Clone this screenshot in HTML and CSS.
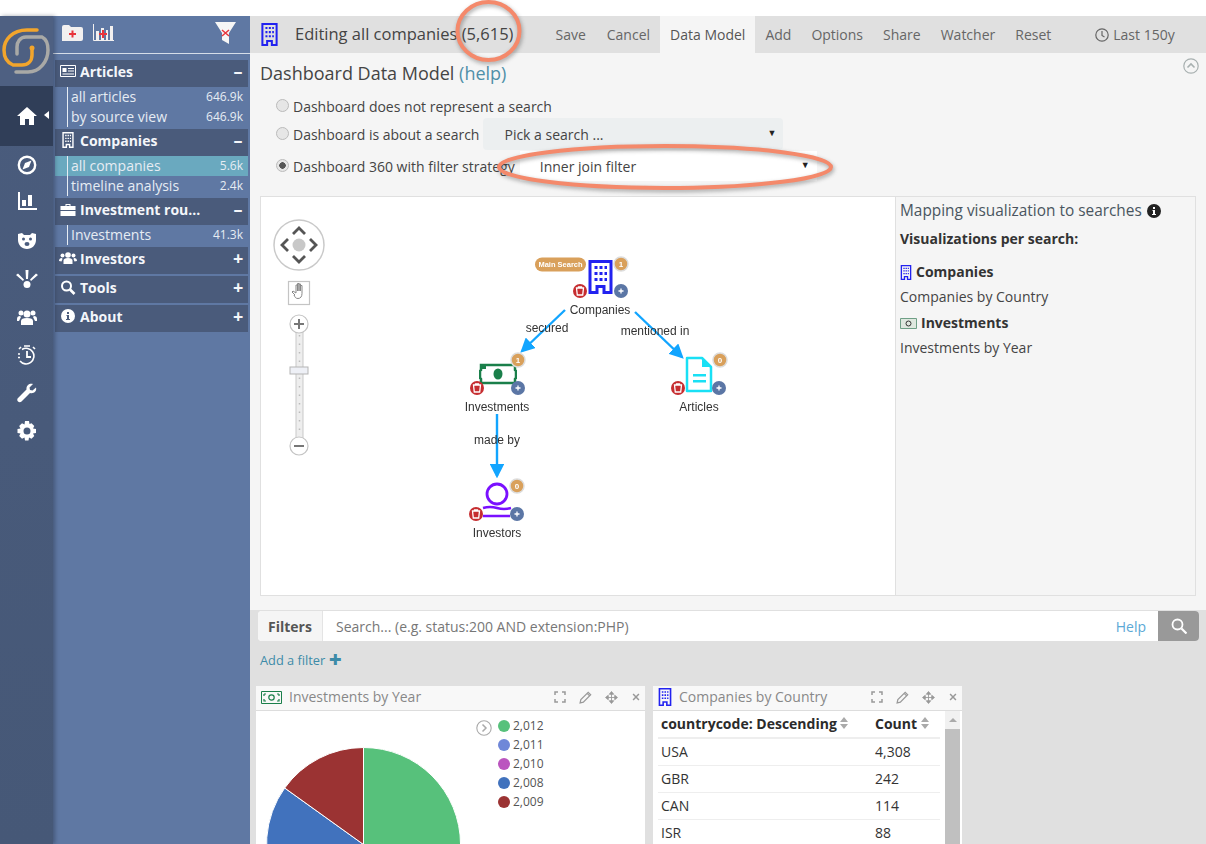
FILE: index.html
```html
<!DOCTYPE html>
<html lang="en">
  <head>
    <meta charset="UTF-8" />
    <title>Editing all companies</title>
    <link rel="stylesheet" href="styles.css">
  </head>
  <body>
    <svg class="defs" width="0" height="0">
      <symbol id="building" viewBox="0 0 24 34">
        <path d="M1.500 1.500h21v31h-7v-6h-7v6h-7z" fill="none" stroke="currentColor" stroke-width="3" />
        <path d="M6 6h3v3H6zM11 6h3v3h-3zM16 6h2.500v3H16zM6 12h3v3H6zM11 12h3v3h-3zM16 12h2.500v3H16zM6 18h3v3H6zM11 18h3v3h-3zM16 18h2.500v3H16z" fill="currentColor" />
      </symbol>
      <symbol id="money" viewBox="0 0 38 22">
        <path d="M2 2h34v5l1 1v7l-1 1v4H2v-4l-1-1V8l1-1z" fill="none" stroke="currentColor" stroke-width="2.500" />
        <ellipse cx="19" cy="11" rx="4.500" ry="5.500" fill="currentColor" />
        <path d="M2 2h5v4H2z" fill="currentColor" />
      </symbol>
      <symbol id="trash" viewBox="0 0 14 14">
        <circle cx="7" cy="7" r="7" fill="#c62d30" />
        <path d="M3.500 4h7l-.8 7H4.300zM5.500 4V3h3v1" fill="none" stroke="#fff" stroke-width="1.300" />
      </symbol>
      <symbol id="more" viewBox="0 0 14 14">
        <circle cx="7" cy="7" r="7" fill="#5b76a5" />
        <path d="M4.500 7h5M7 4.500v5" stroke="#fff" stroke-width="1.300" />
      </symbol>
      <symbol id="expand" viewBox="0 0 12 12">
        <path d="M1 4V1h3M8 1h3v3M11 8v3H8M4 11H1V8" fill="none" stroke="currentColor" stroke-width="1.500" />
      </symbol>
      <symbol id="pencil" viewBox="0 0 12 12">
        <path d="M1 11l.7-3L8.500 1.200l2.300 2.300L4 10.300zM7.500 2.200l2.300 2.300" fill="none" stroke="currentColor" stroke-width="1.100" />
      </symbol>
      <symbol id="move" viewBox="0 0 12 12">
        <path d="M6 .5L8 3H4zM6 11.500L4 9h4zM.5 6L3 4v4zM11.500 6L9 8V4zM6 2v8M2 6h8" fill="currentColor" stroke="currentColor" stroke-width=".8" />
      </symbol>
      <symbol id="close" viewBox="0 0 12 12">
        <path d="M2.500 2.500l7 7M9.500 2.500l-7 7" stroke="currentColor" stroke-width="1.800" />
      </symbol>
      <symbol id="sort" viewBox="0 0 8 12">
        <path d="M4 0l4 5H0zM4 12L0 7h8z" fill="currentColor" />
      </symbol>
    </svg>

    <div class="page">
      <nav class="rail">
        <div class="logo">
          <svg width="48" height="48" viewBox="0 0 48 48" fill="none" stroke-width="3.500" stroke-linecap="round">
            <path d="M14 45H26C38 45 46 34 46 23C46 17 44 12 40 10H24C18 10 15 15 15 20V27" stroke="#a9a9a6" />
            <path d="M35 3H25C10 3 2 13 2 23C2 31 6 36 11 38H20C26 38 30 34 30 28V21" stroke="#f2a52c" />
            <circle cx="30" cy="21" r="2.500" fill="#f2a52c" />
          </svg>
        </div>
        <a class="rail-item is-active">
          <svg width="20" height="18" viewBox="0 0 20 18" fill="#fff"><path d="M10 0l10 9h-3v9h-5v-6H8v6H3V9H0z" /></svg>
        </a>
        <a class="rail-item">
          <svg width="20" height="20" viewBox="0 0 20 20"><circle cx="10" cy="10" r="8.200" fill="none" stroke="#fff" stroke-width="2.400" /><path d="M14.500 5.500L12 12l-6.500 2.500L8 8z" fill="#fff" /></svg>
        </a>
        <a class="rail-item rail-chart">
          <svg width="20" height="20" viewBox="0 0 20 20" fill="#fff"><path d="M1 1h2v16h17v2H1zM5 9h4v6H5zM11 4h4v11h-4z" /></svg>
        </a>
        <a class="rail-item">
          <svg width="20" height="18" viewBox="0 0 20 18" fill="#fff"><path d="M1 2l4-1 2 2h6l2-2 4 1v6c0 5-4 9-9 9s-9-4-9-9z" /><circle cx="6.500" cy="7" r="1.500" fill="#4b5d7e" /><circle cx="13.500" cy="7" r="1.500" fill="#4b5d7e" /><ellipse cx="10" cy="12" rx="2.500" ry="2" fill="#4b5d7e" /></svg>
        </a>
        <a class="rail-item">
          <svg width="24" height="20" viewBox="0 0 24 20" fill="#fff"><circle cx="12" cy="15.500" r="3.500" /><path d="M10.500 1h3l-.5 9h-2zM1 6l2-1.500 6 6L8 12zM23 6l-2-1.500-6 6 1 1.500z" /></svg>
        </a>
        <a class="rail-item">
          <svg width="20" height="16" viewBox="0 0 20 16" fill="#fff"><circle cx="10" cy="5" r="3.500" /><circle cx="4" cy="4" r="2.500" /><circle cx="16" cy="4" r="2.500" /><path d="M4 16v-4c0-2 2-3 6-3s6 1 6 3v4zM0 10c0-2 1-3 3-3l1 1-2 4H0zM20 10c0-2-1-3-3-3l-1 1 2 4h2z" /></svg>
        </a>
        <a class="rail-item">
          <svg width="20" height="20" viewBox="0 0 20 20" fill="none" stroke="#fff" stroke-width="1.600"><path d="M5 4.500A7.800 7.800 0 1 1 3 16" /><path d="M10 6v6h4" stroke-width="1.800" /><path d="M7 1h6M2 4l2-2M18 4l-2-2M1 9h2M1 12.500h2" /></svg>
        </a>
        <a class="rail-item">
          <svg width="20" height="20" viewBox="0 0 20 20" fill="#fff"><path d="M19 4.500l-3.500 3L13 7l-.5-2.500L16 1c-3-1-7 1-6.500 5.500L1 15c-1 1-1 2.500 0 3.500s2.500 1 3.500 0L13 10c4 1 7-2 6-5.500z" /></svg>
        </a>
        <a class="rail-item">
          <svg width="20" height="20" viewBox="0 0 20 20" fill="#fff"><path fill-rule="evenodd" d="M8 0h4l.5 3 2-.8 2.800 2.800-1.300 2.500 3 .5v4l-3 .5 1.300 2.500-2.800 2.800-2.500-1.300-.5 3H8l-.5-3-2.500 1.300L2.200 15l1.300-2.500-3-.5V8l3-.5L2.200 5 5 2.200l2.500 1.300zM10 6.500a3.500 3.500 0 1 0 0 7 3.500 3.500 0 0 0 0-7z" /></svg>
        </a>
      </nav>

      <aside class="sidebar">
        <div class="side-tools">
          <svg width="21" height="16" viewBox="0 0 21 16"><path d="M0 2q0-2 2-2h5l2 2h10q2 0 2 2v10q0 2-2 2H0z" fill="#f2f0f0" /><path d="M7 9h7M10.500 5.500v7" stroke="#e8343c" stroke-width="2" /></svg>
          <svg width="21" height="17" viewBox="0 0 21 17"><path d="M.5 0v16.500H21" fill="none" stroke="#f2f0f0" /><path d="M3 7h3v9H3zM13 6h2v10h-2zM17 2h3v14h-3zM8 4h3v12H8z" fill="#f2f0f0" /><path d="M6 10h8M10 6v8" stroke="#e8343c" stroke-width="2" /></svg>
          <svg class="funnel" width="21" height="22" viewBox="0 0 21 22"><path d="M0 0h21l-7 11v11l-7-4v-7z" fill="#f6f6f6" /><path d="M7 8l7 6M14 8l-7 6" stroke="#e8343c" stroke-width="1.500" /></svg>
        </div>

        <section class="group">
          <h3 class="group-head">
            <svg class="group-icon" width="16" height="12" viewBox="0 0 16 12"><path d="M.5.500h15v11H.5z" fill="none" stroke="#fff" /><path d="M2.500 3h4v4h-4zM8 3h6v1H8zM8 5.500h6v1H8zM2.500 8.500h11.500v1H2.500z" fill="#fff" /></svg>
            <span class="group-name">Articles</span><span class="toggle">–</span>
          </h3>
          <ul class="rows">
            <li class="row"><span>all articles</span><span class="row-count">646.9k</span></li>
            <li class="row"><span>by source view</span><span class="row-count">646.9k</span></li>
          </ul>
        </section>

        <section class="group">
          <h3 class="group-head">
            <svg class="group-icon icon-building" width="12" height="16"><use href="#building" /></svg>
            <span class="group-name">Companies</span><span class="toggle">–</span>
          </h3>
          <ul class="rows">
            <li class="row is-current"><span>all companies</span><span class="row-count">5.6k</span></li>
            <li class="row"><span>timeline analysis</span><span class="row-count">2.4k</span></li>
          </ul>
        </section>

        <section class="group">
          <h3 class="group-head">
            <svg class="group-icon" width="15" height="13" viewBox="0 0 15 13" fill="#fff"><path d="M5 3V1h5v2h5v4H0V3zM6 2v1h3V2zM0 8h15v5H0z" /></svg>
            <span class="group-name">Investment rou...</span><span class="toggle">–</span>
          </h3>
          <ul class="rows">
            <li class="row"><span>Investments</span><span class="row-count">41.3k</span></li>
          </ul>
        </section>

        <section class="group">
          <h3 class="group-head">
            <svg class="group-icon" width="18" height="12" viewBox="0 0 18 12" fill="#fff"><circle cx="9" cy="3" r="2.800" /><circle cx="3.500" cy="3.500" r="2" /><circle cx="14.500" cy="3.500" r="2" /><path d="M4.500 12V8.500C4.500 7 6 6 9 6s4.500 1 4.500 2.500V12zM0 9c0-2 1-3 3-3l.5 1-1 2.500zM18 9c0-2-1-3-3-3l-.5 1 1 2.500z" /></svg>
            <span class="group-name">Investors</span><span class="toggle">+</span>
          </h3>
        </section>

        <section class="group">
          <h3 class="group-head">
            <svg class="group-icon" width="15" height="15" viewBox="0 0 15 15" fill="none" stroke="#fff"><circle cx="6" cy="6" r="4.500" stroke-width="2" /><path d="M9.500 9.500l4.500 4.500" stroke-width="2.600" /></svg>
            <span class="group-name">Tools</span><span class="toggle">+</span>
          </h3>
        </section>

        <section class="group">
          <h3 class="group-head">
            <svg class="group-icon" width="14" height="14" viewBox="0 0 14 14"><circle cx="7" cy="7" r="7" fill="#fff" /><path d="M6 3h2v2H6zM5.500 6H8v4h1v1H5v-1h1V7h-.5z" fill="#4a5b7b" /></svg>
            <span class="group-name">About</span><span class="toggle">+</span>
          </h3>
        </section>
      </aside>

      <main class="main">
        <header class="topbar">
          <svg class="title-icon" width="17" height="23"><use href="#building" /></svg>
          <h1 class="title">Editing all companies <span>(5,615)</span></h1>
          <div class="menu">
            <a>Save</a>
            <a>Cancel</a>
            <a class="is-open">Data Model</a>
            <a>Add</a>
            <a>Options</a>
            <a>Share</a>
            <a>Watcher</a>
            <a>Reset</a>
          </div>
          <div class="timepicker">
            <svg width="14" height="14" viewBox="0 0 14 14" fill="none" stroke="#666" stroke-width="1.200"><circle cx="7" cy="7" r="6.200" /><path d="M7 3v4.500l2.500 1.500" /></svg>
            Last 150y
          </div>
        </header>

        <section class="editor">
          <div class="editor-head">
            <h2>Dashboard Data Model <a>(help)</a></h2>
            <svg width="16" height="16" viewBox="0 0 16 16" fill="none" stroke="#a8b0b0" stroke-width="1.200"><circle cx="8" cy="8" r="7.200" /><path d="M4.500 9.500L8 6l3.500 3.500" stroke-width="1.600" /></svg>
          </div>

          <div class="strategy">
            <label class="choice">
              <input type="radio" name="model" />Dashboard does not represent a search
            </label>
            <label class="choice choice-search">
              <input type="radio" name="model" />Dashboard is about a search
              <span class="pick pick-search">Pick a search ...<i>▼</i></span>
            </label>
            <label class="choice choice-filter">
              <input type="radio" name="model" checked />Dashboard 360 with filter strategy
              <span class="pick pick-filter">Inner join filter<i>▼</i></span>
            </label>
          </div>

          <div class="model">
            <div class="canvas">
              <svg class="graph" width="634" height="398" viewBox="261 197 634 398">
                <defs>
                  <marker id="head" markerWidth="6" markerHeight="6" refX="5" refY="3" orient="auto">
                    <path d="M0 0l6 3L0 6z" fill="#12a5ff" />
                  </marker>
                </defs>

                <!-- pan and zoom controls -->
                <circle cx="299" cy="245" r="25" fill="#fff" stroke="#c9c9c9" stroke-width="1.500" />
                <circle cx="299" cy="245" r="6.500" fill="#c8c8c8" />
                <path d="M293 234l6-6 6 6M293 256l6 6 6-6M288 239l-6 6 6 6M310 239l6 6-6 6" fill="none" stroke="#555" stroke-width="2.800" />
                <rect x="288.500" y="281.500" width="21" height="23" fill="#fff" stroke="#c4c4c4" stroke-width="1.200" />
                <path d="M295 295l-3-3 1-1 3 2v-8h1.500v6-7.500h1.500v7.500-7h1.500v7-5.500h1.500v8c0 3-1.500 5-4 5s-3-1.500-4-3.500z" fill="#fff" stroke="#888" />
                <rect x="296" y="330" width="7" height="112" fill="#eee" stroke="#c9c9c9" />
                <path d="M299.500 335v102" stroke="#bbb" stroke-width="1.500" stroke-dasharray="1.500 7" />
                <rect x="290" y="367" width="18" height="7" fill="#eef0f6" stroke="#b5b5b5" />
                <circle cx="299" cy="324" r="9" fill="#fff" stroke="#c4c4c4" stroke-width="1.200" />
                <path d="M294 324h10M299 319v10" stroke="#777" stroke-width="2" />
                <circle cx="299" cy="446" r="9" fill="#fff" stroke="#c4c4c4" stroke-width="1.200" />
                <path d="M294 446h10" stroke="#777" stroke-width="2" />

                <!-- edges -->
                <g stroke="#12a5ff" stroke-width="2.400" fill="none">
                  <path d="M565 310L522 351" marker-end="url(#head)" />
                  <path d="M635 312L682 357" marker-end="url(#head)" />
                  <path d="M497 414V476" marker-end="url(#head)" />
                </g>
                <g class="edge-label">
                  <text x="547" y="332">secured</text>
                  <text x="655" y="335">mentioned in</text>
                  <text x="497" y="444">made by</text>
                </g>

                <!-- nodes -->
                <rect x="535" y="257.500" width="51" height="14" rx="7" fill="#d9a05b" />
                <text class="main-search" x="560.500" y="267">Main Search</text>
                <use href="#building" x="588" y="260" width="25" height="34" color="#2222f0" />
                <circle class="badge" cx="621" cy="264" r="7" />
                <text class="badge-text" x="621" y="267">1</text>
                <use href="#trash" x="573" y="284" width="14" height="14" />
                <use href="#more" x="614" y="284" width="14" height="14" />
                <text class="node-label" x="600" y="314">Companies</text>

                <use href="#money" x="479" y="363" width="38" height="22" color="#1a7f4a" />
                <circle class="badge" cx="518" cy="360" r="7" />
                <text class="badge-text" x="518" y="363">1</text>
                <use href="#trash" x="470" y="381" width="14" height="14" />
                <use href="#more" x="511" y="381" width="14" height="14" />
                <text class="node-label" x="497" y="411">Investments</text>

                <path d="M687 358h15l9 9v24h-24z" fill="none" stroke="#19e0f5" stroke-width="2.500" stroke-linejoin="round" />
                <path d="M702 358v9h9z" fill="#19e0f5" />
                <path d="M693 374h13v2.500h-13zM693 380h13v2.500h-13z" fill="#19e0f5" />
                <circle class="badge" cx="720" cy="360" r="7" />
                <text class="badge-text" x="720" y="363">0</text>
                <use href="#trash" x="671" y="381" width="14" height="14" />
                <use href="#more" x="712" y="381" width="14" height="14" />
                <text class="node-label" x="699" y="411">Articles</text>

                <circle cx="497" cy="494" r="10" fill="none" stroke="#7a10ff" stroke-width="2.800" />
                <path d="M483 508q7-2 14 0t14 0M483 516h27" fill="none" stroke="#7a10ff" stroke-width="2.400" />
                <circle class="badge" cx="517" cy="486" r="7" />
                <text class="badge-text" x="517" y="489">0</text>
                <use href="#trash" x="469" y="507" width="14" height="14" />
                <use href="#more" x="510" y="507" width="14" height="14" />
                <text class="node-label" x="497" y="537">Investors</text>
              </svg>
            </div>
            <div class="mapping">
              <p class="mapping-title">Mapping visualization to searches
                <svg width="14" height="14" viewBox="0 0 14 14"><circle cx="7" cy="7" r="7" fill="#222" /><path d="M6 3h2v2H6zM5.500 6H8v4h1v1H5v-1h1V7h-.5z" fill="#fff" /></svg>
              </p>
              <p class="mapping-sub">Visualizations per search:</p>
              <p class="mapping-entity">
                <svg class="icon-blue" width="12" height="15"><use href="#building" /></svg> Companies
              </p>
              <p class="mapping-vis">Companies by Country</p>
              <p class="mapping-entity">
                <svg class="icon-green" width="17" height="11" viewBox="0 0 17 11"><path d="M.5.500h16v10H.5z" fill="#dfe8df" stroke="#6f9f86" /><circle cx="8.500" cy="5.500" r="2.500" fill="none" stroke="#333" /></svg> Investments
              </p>
              <p class="mapping-vis">Investments by Year</p>
            </div>
          </div>
        </section>

        <section class="board">
          <div class="filterbar">
            <span class="filter-label">Filters</span>
            <span class="filter-query">Search... (e.g. status:200 AND extension:PHP)</span>
            <a class="filter-help">Help</a>
            <span class="filter-go">
              <svg width="16" height="16" viewBox="0 0 16 16" fill="none" stroke="#fff"><circle cx="6.500" cy="6.500" r="5" stroke-width="1.800" /><path d="M10.500 10.500l5 5" stroke-width="2.200" /></svg>
            </span>
          </div>
          <a class="add-filter">Add a filter <b>✚</b></a>

          <div class="panels">
            <article class="panel panel-pie">
              <header class="panel-head">
                <svg width="21" height="13" viewBox="0 0 21 13"><path d="M.5.500h20v12H.5z" fill="none" stroke="#1a7f4a" /><path d="M3 3v2M3 8v2h2M18 3v2M18 8v2h-2M3 3h2M16 3h2" stroke="#1a7f4a" stroke-width="1.200" fill="none" /><circle cx="10.500" cy="6.500" r="2.700" fill="none" stroke="#1a7f4a" stroke-width="1.200" /></svg>
                <h4>Investments by Year</h4>
                <div class="panel-tools">
                  <svg width="12" height="12"><use href="#expand" /></svg>
                  <svg width="13" height="13"><use href="#pencil" /></svg>
                  <svg width="13" height="13"><use href="#move" /></svg>
                  <svg width="10" height="10"><use href="#close" /></svg>
                </div>
              </header>
              <div class="pie-body">
                <svg class="pie" width="195" height="195" viewBox="-97.500 -97.500 195 195">
                  <path d="M0 0V-97A97 97 0 1 1 0 97z" fill="#57c17b" stroke="#fff" />
                  <path d="M0 0V97A97 97 0 0 1 -78.800 -56.500z" fill="#4172bd" stroke="#fff" />
                  <path d="M0 0L-78.800 -56.500A97 97 0 0 1 0 -97z" fill="#9b3333" stroke="#fff" />
                </svg>
                <svg class="legend-toggle" width="16" height="16" viewBox="0 0 16 16" fill="none" stroke="#aaa" stroke-width="1.100"><circle cx="8" cy="8" r="7.200" /><path d="M6.500 4.500L10 8l-3.500 3.500" stroke-width="1.500" /></svg>
                <ul class="legend">
                  <li><i class="dot dot-2012"></i>2,012</li>
                  <li><i class="dot dot-2011"></i>2,011</li>
                  <li><i class="dot dot-2010"></i>2,010</li>
                  <li><i class="dot dot-2008"></i>2,008</li>
                  <li><i class="dot dot-2009"></i>2,009</li>
                </ul>
              </div>
            </article>

            <article class="panel panel-table">
              <header class="panel-head">
                <svg class="icon-blue" width="14" height="18"><use href="#building" /></svg>
                <h4>Companies by Country</h4>
                <div class="panel-tools">
                  <svg width="12" height="12"><use href="#expand" /></svg>
                  <svg width="13" height="13"><use href="#pencil" /></svg>
                  <svg width="13" height="13"><use href="#move" /></svg>
                  <svg width="10" height="10"><use href="#close" /></svg>
                </div>
              </header>
              <div class="table-body">
                <table class="counts">
                  <thead>
                    <tr>
                      <th>countrycode: Descending <svg width="8" height="12"><use href="#sort" /></svg></th>
                      <th>Count <svg width="8" height="12"><use href="#sort" /></svg></th>
                    </tr>
                  </thead>
                  <tbody>
                    <tr><td>USA</td><td>4,308</td></tr>
                    <tr><td>GBR</td><td>242</td></tr>
                    <tr><td>CAN</td><td>114</td></tr>
                    <tr><td>ISR</td><td>88</td></tr>
                  </tbody>
                </table>
                <div class="scrollbar"><span class="scroll-up"></span><span class="scroll-thumb"></span></div>
              </div>
            </article>
          </div>
        </section>
      </main>
    </div>

    <!-- hand drawn annotations on top of the screenshot -->
    <svg class="marks" width="1206" height="844" viewBox="0 0 1206 844">
      <ellipse cx="488.500" cy="31" rx="31" ry="29" />
      <ellipse cx="665" cy="167" rx="166" ry="21" />
    </svg>
  </body>
</html>
```

FILE: styles.css
```css
* {
  box-sizing: border-box;
}

html,
body {
  height: 844px;
  overflow: hidden;
}

body {
  margin: 0;
  position: relative;
  font-family: "Open Sans", "Liberation Sans", sans-serif;
  font-size: 14px;
  color: #333;
  background: #fff;
}

h1,
h2,
h3,
h4,
p,
ul {
  margin: 0;
  padding: 0;
}

ul {
  list-style: none;
}

.defs {
  position: absolute;
}

.page {
  display: flex;
  height: 844px;
  padding-top: 16px;
}

/* left icon rail */
.rail {
  width: 53px;
  flex: none;
  background: linear-gradient(#4a5c7d, #465877);
  box-shadow: 2px 0 4px rgba(30, 40, 60, 0.4);
  position: relative;
  z-index: 1;
}

.logo {
  height: 70px;
  padding: 11px 0 0 2px;
  background: #4e6082;
}

.rail-item {
  display: flex;
  align-items: center;
  justify-content: center;
  height: 38px;
  position: relative;
}

.rail-chart svg {
  margin-bottom: 4px;
}

.rail-item.is-active {
  height: 60px;
  background: #303e58;
}

.rail-item.is-active::after {
  content: "";
  position: absolute;
  right: 4px;
  top: 25px;
  border: 4px solid transparent;
  border-left: 0;
  border-right: 5px solid #fff;
}

/* sidebar with the saved dashboards */
.sidebar {
  width: 197px;
  flex: none;
  padding: 0 2px;
  background: #5f78a3;
}

.side-tools {
  display: flex;
  align-items: center;
  gap: 10px;
  height: 38px;
  margin: 0 -2px 6px;
  padding: 0 14px 4px 9px;
  border-bottom: 1px solid #d5dde8;
}

.funnel {
  margin-left: auto;
}

.group {
  margin-bottom: 2px;
}

.group-head {
  display: flex;
  align-items: center;
  height: 27px;
  padding: 0 5px 5px 4px;
  background: #4a5b7b;
  color: #f4f6fa;
  font-size: 14px;
  font-weight: 700;
}

.group-icon {
  flex: none;
  width: 18px;
  margin-right: 3px;
  color: #fff;
}

.group-name {
  flex: 1;
  white-space: nowrap;
}

.toggle {
  font-size: 18px;
  line-height: 1;
  font-weight: 700;
  width: 10px;
  text-align: center;
}

.row {
  display: flex;
  justify-content: space-between;
  align-items: center;
  height: 20px;
  padding: 0 5px 2px 16px;
  color: #e6ecf3;
  font-size: 14px;
  position: relative;
}

.row::before {
  content: "";
  position: absolute;
  left: 12px;
  top: 0;
  bottom: 0;
  width: 1px;
  background: #e6ecf3;
}

.row.is-current {
  background: #6aa9bf;
}

.row-count {
  font-size: 12px;
}

/* main column */
.main {
  flex: 1;
  min-width: 0;
  background: #e0e0e0;
}

.topbar {
  display: flex;
  align-items: center;
  height: 37px;
  padding-left: 11px;
  background: #e0e0e0;
}

.title-icon,
.icon-blue {
  color: #2222f0;
  flex: none;
}

.title {
  margin: 0 0 2px 17px;
  font-size: 16.500px;
  font-weight: 400;
  color: #444;
  white-space: nowrap;
}

.menu {
  display: flex;
  height: 37px;
  margin-left: 32px;
}

.menu a {
  display: flex;
  align-items: center;
  padding: 0 10px;
  color: #666;
}

.menu a:nth-child(2) {
  padding-left: 11px;
}

.menu a.is-open {
  background: #f5f5f5;
  color: #555;
}

.timepicker {
  display: flex;
  align-items: center;
  gap: 4px;
  margin-left: 34px;
  color: #666;
  white-space: nowrap;
}

.editor {
  height: 557px;
  padding: 0 10px;
  background: #f5f5f5;
}

.editor-head {
  display: flex;
  justify-content: space-between;
  padding-top: 7px;
  height: 42px;
}

.editor-head svg {
  margin: -2px -3px 0 0;
}

.editor-head h2 {
  font-size: 18px;
  font-weight: 400;
  line-height: 26px;
  color: #444;
}

.editor-head a {
  color: #4f8fa8;
}

.strategy {
  padding-left: 16px;
  height: 101px;
}

.choice {
  display: flex;
  align-items: center;
  color: #444;
  white-space: nowrap;
  height: 22px;
}

.choice input {
  appearance: none;
  width: 13px;
  height: 13px;
  margin: 0 4px 2px 0;
  border: 1px solid #bbb;
  border-radius: 50%;
  background: #e6e6e6;
}

.choice input:checked {
  background: radial-gradient(circle, #555 0 3px, #e6e6e6 3.500px);
}

.choice-search {
  height: 32px;
  margin-top: 1px;
}

.choice-filter {
  height: 30px;
  margin-top: 1px;
}

.pick {
  display: flex;
  align-items: center;
  justify-content: space-between;
  flex: none;
}

.pick i {
  margin-top: -4px;
  font-style: normal;
  font-size: 9px;
  color: #222;
}

.pick-search {
  width: 300px;
  height: 32px;
  margin-left: 4px;
  padding: 0 7px 0 21px;
  background: #eceff0;
  border-radius: 4px;
}

.pick-filter {
  width: 297px;
  height: 30px;
  margin-left: 5px;
  padding: 0 7px 0 20px;
  background: #fff;
}

.model {
  display: flex;
  height: 400px;
  border: 1px solid #e0e0e0;
}

.canvas {
  width: 634px;
  flex: none;
  background: #fff;
}

.graph {
  display: block;
  filter: blur(0.3px);
}

.edge-label text,
.node-label {
  font-family: "Liberation Sans", Arial, sans-serif;
  font-size: 12px;
  text-anchor: middle;
  fill: #333;
}

.main-search {
  font-family: "Liberation Sans", Arial, sans-serif;
  font-size: 7.500px;
  font-weight: 700;
  text-anchor: middle;
  fill: #fff;
}

.badge {
  fill: #d9a05b;
  stroke: #ddd;
  stroke-width: 1.500;
}

.badge-text {
  font-family: "Liberation Sans", Arial, sans-serif;
  font-size: 8px;
  font-weight: 700;
  text-anchor: middle;
  fill: #fff;
}

.mapping {
  flex: 1;
  padding: 4px 4px;
  border-left: 1px solid #e0e0e0;
  color: #444;
}

.mapping-title {
  display: flex;
  align-items: center;
  gap: 5px;
  font-size: 15.400px;
  line-height: 20px;
  color: #4a5560;
}

.mapping-sub {
  margin-top: 8px;
  font-weight: 700;
  line-height: 20px;
  color: #333;
}

.mapping-entity {
  display: flex;
  align-items: center;
  gap: 4px;
  margin-top: 6px;
  line-height: 20px;
  font-weight: 700;
  color: #333;
}

.mapping-sub + .mapping-entity {
  margin-top: 13px;
}

.mapping-vis {
  margin-top: 5px;
  line-height: 20px;
}

/* filter bar and dashboard panels */
.board {
  padding: 1px 7px 0 6px;
}

.filterbar {
  display: flex;
  align-items: center;
  height: 30px;
  margin-left: 2px;
  background: #fff;
  border-radius: 4px;
}

.filter-label {
  display: flex;
  align-items: center;
  width: 65px;
  height: 30px;
  padding-left: 10px;
  background: #f5f5f5;
  border-right: 1px solid #e4e4e4;
  border-radius: 4px 0 0 4px;
  font-weight: 700;
  color: #555;
}

.filter-query {
  flex: 1;
  padding-left: 13px;
  color: #777;
}

.filter-help {
  margin-right: 12px;
  color: #5ba9d6;
}

.filter-go {
  display: flex;
  align-items: center;
  justify-content: center;
  width: 41px;
  height: 30px;
  background: #999;
  border-radius: 0 4px 4px 0;
}

.add-filter {
  display: block;
  margin: 9px 0 0 4px;
  height: 20px;
  font-size: 12.800px;
  line-height: 19px;
  color: #3d8ba8;
}

.add-filter b {
  font-size: 15px;
  font-weight: 400;
}

.panels {
  display: flex;
  gap: 8px;
  height: 158px;
  margin-top: 16px;
  overflow: hidden;
}

.panel {
  flex: none;
  background: #fff;
}

.panel-pie {
  width: 389px;
}

.panel-table {
  width: 309px;
}

.panel-head {
  display: flex;
  align-items: center;
  gap: 7px;
  height: 25px;
  padding: 0 4px 2px 5px;
  background: #f8f8f8;
  border-bottom: 1px solid #ddd;
}

.panel-head h4 {
  flex: 1;
  margin-bottom: 1px;
  font-size: 14px;
  font-weight: 400;
  color: #888;
}

.panel-tools {
  display: flex;
  align-items: center;
  gap: 13px;
  color: #999;
}

.pie-body {
  display: flex;
  align-items: flex-start;
  height: 133px;
  overflow: hidden;
}

.pie {
  flex: none;
  margin: 36px 0 0 10px;
}

.legend-toggle {
  flex: none;
  margin: 9px 0 0 15px;
}

.legend {
  margin: 5px 0 0 6px;
  font-size: 12px;
  color: #555;
}

.legend li {
  display: flex;
  align-items: center;
  gap: 3px;
  height: 19px;
}

.dot {
  width: 12px;
  height: 12px;
  border-radius: 50%;
}

.dot-2012 {
  background: #57c17b;
}

.dot-2011 {
  background: #6f87d8;
}

.dot-2010 {
  background: #bb55bf;
}

.dot-2008 {
  background: #4172bd;
}

.dot-2009 {
  background: #9b3333;
}

.table-body {
  display: flex;
  height: 133px;
  padding-left: 5px;
  overflow: hidden;
}

.counts {
  width: 282px;
  height: 136px;
  flex: none;
  border-collapse: separate;
  border-spacing: 0;
  color: #333;
  text-align: left;
}

.counts th {
  height: 28px;
  padding: 0 3px 2px;
  border-bottom: 2px solid #eee;
  white-space: nowrap;
  font-size: 14px;
  color: #2b2b2b;
}

.counts th svg {
  color: #aaa;
}

.counts td {
  height: 27px;
  padding: 0 3px 2px;
  border-bottom: 1px solid #eee;
}

.counts td:first-child {
  width: 214px;
}

.scrollbar {
  width: 15px;
  height: 133px;
  margin-left: 5px;
  background: #f1f1f1;
  overflow: hidden;
}

.scroll-up {
  display: block;
  width: 0;
  margin: 7px auto 0;
  border: 4px solid transparent;
  border-top: 0;
  border-bottom: 4px solid #aaa;
}

.scroll-thumb {
  display: block;
  height: 120px;
  margin-top: 7px;
  background: #c0c0c0;
}

.marks {
  position: absolute;
  left: 0;
  top: 0;
  pointer-events: none;
  filter: drop-shadow(1px 2px 2px rgba(60, 60, 60, 0.45));
}

.marks ellipse {
  fill: none;
  stroke: #f4896b;
  stroke-width: 4;
}
```
